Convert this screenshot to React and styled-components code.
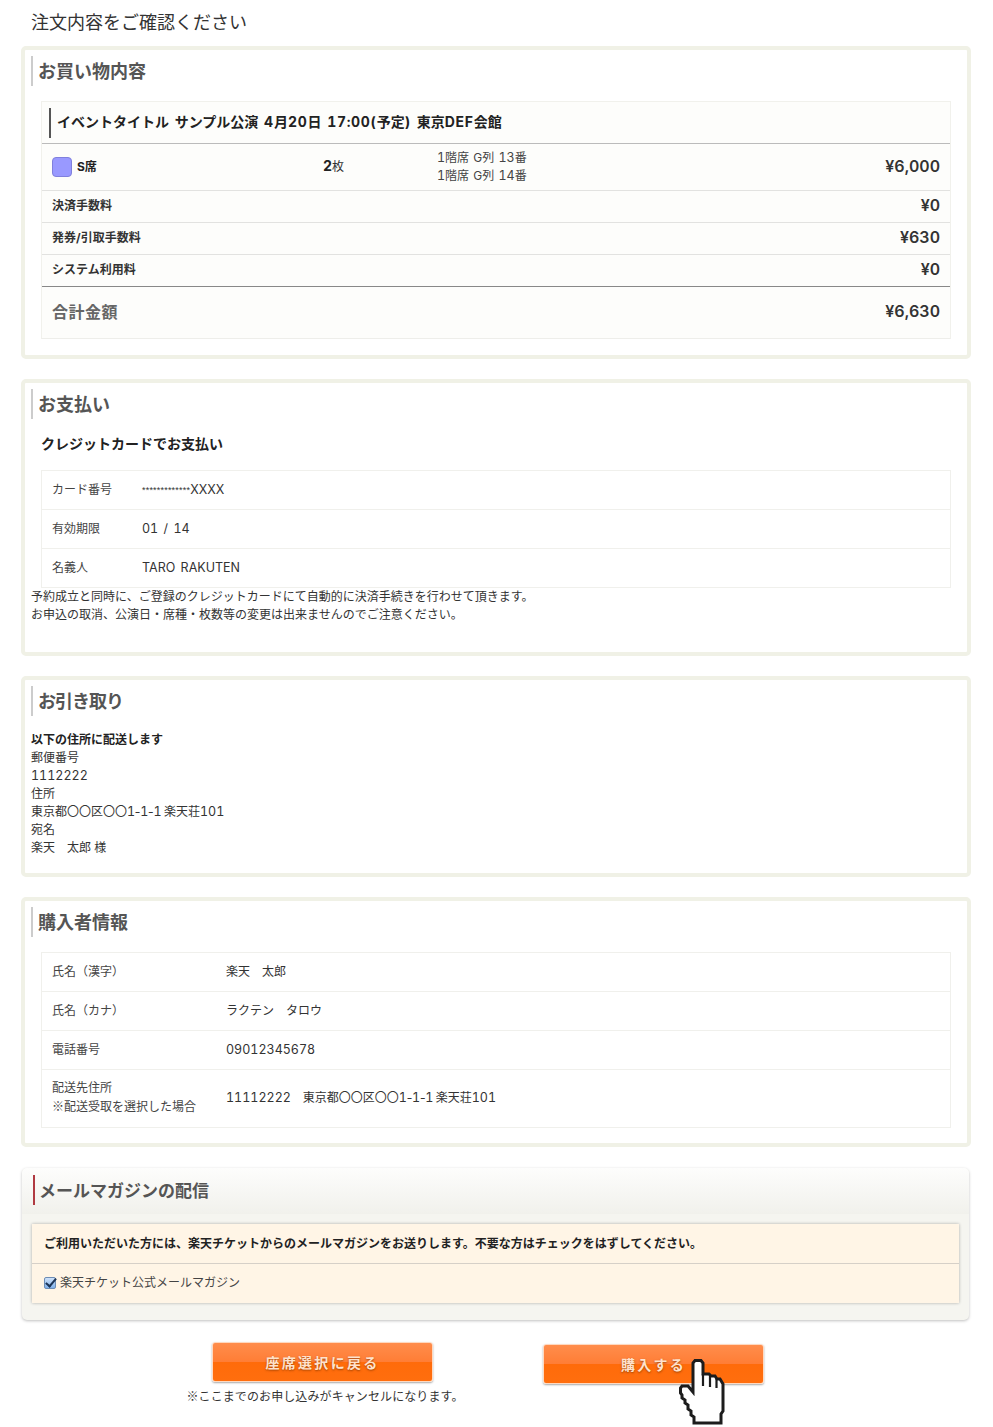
import React from "react";
import styled, { createGlobalStyle } from "styled-components";

const GlobalStyle = createGlobalStyle`
  html, body {
    margin: 0;
    padding: 0;
    background: #fff;
    color: #333;
    font-family: "Inter", "Noto Sans CJK JP", sans-serif;
    font-size: 12px;
    line-height: 18px;
    font-variant-numeric: tabular-nums;
  }
`;

const feeRows = [
  { label: "決済手数料", price: "¥0" },
  { label: "発券/引取手数料", price: "¥630" },
  { label: "システム利用料", price: "¥0" },
];

const buyerRows = [
  { label: "氏名（漢字）", value: "楽天　太郎" },
  { label: "氏名（カナ）", value: "ラクテン　タロウ" },
  { label: "電話番号", number: "09012345678" },
];

const App = () => {
  return (
    <Page>
      <GlobalStyle />
      <PageTitle>注文内容をご確認ください</PageTitle>

      <Section>
        <Heading>お買い物内容</Heading>
        <OrderTable>
          <EventRow>
            <EventTitle>
              イベントタイトル サンプル公演 <Latin>4</Latin>月<Latin>20</Latin>日 <Latin>17:00(</Latin>予定<Latin>)</Latin> 東京<Latin>DEF</Latin>会館
            </EventTitle>
          </EventRow>
          <SeatRow>
            <SeatType>
              <Swatch />
              <b>S席</b>
            </SeatType>
            <SeatCount>
              <b>2</b>枚
            </SeatCount>
            <SeatList>
              <NumText>1</NumText>階席 G列 <NumText>13</NumText>番
              <br />
              <NumText>1</NumText>階席 G列 <NumText>14</NumText>番
            </SeatList>
            <Price>¥6,000</Price>
          </SeatRow>
          {feeRows.map((row) => (
            <FeeRow key={row.label}>
              <FeeLabel>{row.label}</FeeLabel>
              <Price>{row.price}</Price>
            </FeeRow>
          ))}
          <TotalRow>
            <TotalLabel>合計金額</TotalLabel>
            <Price>¥6,630</Price>
          </TotalRow>
        </OrderTable>
      </Section>

      <PaymentSection>
        <Heading>お支払い</Heading>
        <SubHeading>クレジットカードでお支払い</SubHeading>
        <InfoTable>
          <InfoRow>
            <InfoLabel $width={90}>カード番号</InfoLabel>
            <InfoValue>
              <Stars>*************</Stars>
              <NumText>XXXX</NumText>
            </InfoValue>
          </InfoRow>
          <InfoRow>
            <InfoLabel $width={90}>有効期限</InfoLabel>
            <InfoValue>
              <NumText>01 / 14</NumText>
            </InfoValue>
          </InfoRow>
          <InfoRow>
            <InfoLabel $width={90}>名義人</InfoLabel>
            <InfoValue>
              <NumText>TARO RAKUTEN</NumText>
            </InfoValue>
          </InfoRow>
        </InfoTable>
        <Notes>
          予約成立と同時に、ご登録のクレジットカードにて自動的に決済手続きを行わせて頂きます。
          <br />
          お申込の取消、公演日・席種・枚数等の変更は出来ませんのでご注意ください。
        </Notes>
      </PaymentSection>

      <DeliverySection>
        <Heading $tight>お引き取り</Heading>
        <Delivery>
          <b>以下の住所に配送します</b>
          <br />
          郵便番号
          <br />
          <NumText>1112222</NumText>
          <br />
          住所
          <br />
          東京都〇〇区〇〇<NumText $tight>1-1-1 </NumText>楽天荘<NumText>101</NumText>
          <br />
          宛名
          <br />
          楽天　太郎 様
        </Delivery>
      </DeliverySection>

      <BuyerSection>
        <Heading>購入者情報</Heading>
        <InfoTable>
          {buyerRows.map((row) => (
            <InfoRow key={row.label}>
              <InfoLabel $width={174}>{row.label}</InfoLabel>
              <InfoValue>{row.number ? <NumText>{row.number}</NumText> : row.value}</InfoValue>
            </InfoRow>
          ))}
          <InfoRow $height={57}>
            <InfoLabel $width={174}>
              配送先住所
              <br />
              <Mark>※</Mark>配送受取を選択した場合
            </InfoLabel>
            <InfoValue>
              <NumText>11112222</NumText>　東京都〇〇区〇〇<NumText $tight>1-1-1 </NumText>楽天荘<NumText>101</NumText>
            </InfoValue>
          </InfoRow>
        </InfoTable>
      </BuyerSection>

      <MailSection>
        <MailHead>
          <MailHeading>メールマガジンの配信</MailHeading>
        </MailHead>
        <MailBox>
          <MailLead>ご利用いただいた方には、楽天チケットからのメールマガジンをお送りします。不要な方はチェックをはずしてください。</MailLead>
          <MailOption>
            <MailCheck type="checkbox" defaultChecked />
            楽天チケット公式メールマガジン
          </MailOption>
        </MailBox>
      </MailSection>

      <Actions>
        <BackColumn>
          <OrangeButton type="button">座席選択に戻る</OrangeButton>
          <Caption>
            <Mark>※</Mark>ここまでのお申し込みがキャンセルになります。
          </Caption>
        </BackColumn>
        <BuyColumn>
          <OrangeButton type="button">購入する</OrangeButton>
          <HandCursor viewBox="0 0 46 66" aria-hidden="true">
            <path
              d="M14 33 V4 L16 1.500 H22 L24 4 V15 H30 L32 17 H36 L38 20 H41 L44 25 V52 L42 55 V64 H15 V58 L12 56 V52 L9 50 V46 L6 44 V41 L3 39 V36 L1.500 34 V29 L3 27 H9 Z"
              fill="#fff"
              stroke="#1c1c1c"
              strokeWidth="3"
              strokeLinejoin="miter"
            />
            <path d="M24 15 V27 M31 17 V28 M37.500 20 V29" fill="none" stroke="#1c1c1c" strokeWidth="2.200" />
          </HandCursor>
        </BuyColumn>
      </Actions>
    </Page>
  );
};

export default App;

const Page = styled.div`
  width: 950px;
  height: 1427px;
  padding: 0 22px 0 21px;
  overflow: hidden;
`;

const PageTitle = styled.h1`
  margin: 0;
  padding: 10px 0 0 10px;
  height: 46px;
  box-sizing: border-box;
  font-size: 18px;
  line-height: 26px;
  font-weight: 400;
  color: #333;
`;

const Section = styled.section`
  box-sizing: border-box;
  height: 313px;
  margin-bottom: 20px;
  padding: 6px 16px 0 16px;
  border: 4px solid #f0f1e6;
  border-radius: 5px;
  background: #fff;
`;

const PaymentSection = styled(Section)`
  height: 277px;
`;

const DeliverySection = styled(Section)`
  height: 201px;
`;

const BuyerSection = styled(Section)`
  height: 250px;
  margin-bottom: 21px;
`;

const Heading = styled.h2`
  margin: 0 0 0 -10px;
  height: 30px;
  padding-left: 5px;
  border-left: 2px solid #ccc;
  font-size: 18px;
  line-height: 32px;
  font-weight: 700;
  letter-spacing: ${(props) => (props.$tight ? "-1px" : "0")};
  color: #555;
`;

const OrderTable = styled.div`
  margin-top: 15px;
  border: 1px solid #f1f1ec;
  border-bottom-color: #eeeeea;
  background: #fdfdfb;
`;

const EventRow = styled.div`
  box-sizing: border-box;
  height: 42px;
  padding: 6px 0 0 7px;
  border-bottom: 1px solid #bbb;
`;

const EventTitle = styled.div`
  height: 30px;
  padding-left: 6px;
  border-left: 2px solid #555;
  font-size: 14px;
  line-height: 27px;
  font-weight: 700;
  word-spacing: 2px;
  color: #222;
  white-space: nowrap;
`;

const Latin = styled.span`
  letter-spacing: 0.700px;
  line-height: 1;
`;

const SeatRow = styled.div`
  display: flex;
  align-items: center;
  box-sizing: border-box;
  height: 47px;
  padding: 0 10px 1px;
  border-bottom: 1px solid #e2e2e0;
`;

const SeatType = styled.div`
  display: flex;
  align-items: center;
  gap: 5px;
  width: 271px;
  color: #222;
`;

const Swatch = styled.span`
  box-sizing: border-box;
  width: 20px;
  height: 20px;
  border: 1px solid #8080dd;
  border-radius: 4px;
  background: #9999ff;
`;

const SeatCount = styled.div`
  width: 114px;
  color: #333;
  b {
    font-size: 14px;
    color: #222;
  }
`;

const SeatList = styled.div`
  flex: 1;
  line-height: 18px;
  word-spacing: 1px;
  color: #444;
`;

const Price = styled.div`
  margin: 0 0 2px auto;
  font-size: 16px;
  font-weight: 600;
  color: #333;
`;

const FeeRow = styled.div`
  display: flex;
  align-items: center;
  box-sizing: border-box;
  height: 32px;
  padding: 0 10px 1px;
  border-bottom: 1px solid #e2e2e0;
  &:nth-child(5) {
    border-bottom-color: #888;
  }
`;

const FeeLabel = styled.div`
  font-weight: 700;
  color: #333;
`;

const TotalRow = styled.div`
  display: flex;
  align-items: center;
  box-sizing: border-box;
  height: 51px;
  padding: 0 10px 2px;
`;

const TotalLabel = styled.div`
  font-size: 16px;
  line-height: 24px;
  font-weight: 700;
  letter-spacing: 0.500px;
  color: #666;
`;

const SubHeading = styled.h3`
  margin: 14px 0 0;
  height: 22px;
  font-size: 14px;
  line-height: 21px;
  font-weight: 700;
  color: #222;
`;

const InfoTable = styled.div`
  margin-top: 15px;
  border: 1px solid #f0f0ec;
  background: #fff;
`;

const InfoRow = styled.div`
  display: flex;
  align-items: center;
  box-sizing: border-box;
  height: ${(props) => (props.$height ? props.$height : 39)}px;
  padding-left: 10px;
  padding-bottom: ${(props) => (props.$height ? 2 : 0)}px;
  border-bottom: 1px solid #f0f0ec;
  &:last-child {
    border-bottom: 0;
    height: ${(props) => (props.$height ? props.$height : 38)}px;
  }
`;

const InfoLabel = styled.div`
  width: ${(props) => props.$width}px;
  flex-shrink: 0;
  color: #444;
`;

const InfoValue = styled.div`
  font-size: 12px;
  color: #333;
`;

const NumText = styled.span`
  font-size: 12.500px;
  line-height: 1;
  word-spacing: 2px;
  letter-spacing: ${(props) => (props.$tight ? "-1.500px" : "0")};
`;

const Mark = styled.span`
  font-family: "Noto Sans CJK JP", sans-serif;
`;

const Stars = styled.span`
  font-family: "Liberation Sans", sans-serif;
  font-size: 9px;
  line-height: 1;
  letter-spacing: 0.200px;
  vertical-align: 1px;
`;

const Notes = styled.p`
  margin: 0 0 0 -10px;
  line-height: 18px;
  color: #333;
`;

const Delivery = styled.div`
  margin: 15px 0 0 -10px;
  line-height: 18px;
  color: #333;
  b {
    color: #222;
  }
`;

const MailSection = styled.section`
  box-sizing: border-box;
  width: 947px;
  height: 152px;
  margin: 0 0 0 1px;
  border-radius: 5px;
  background: #f5f5f0;
  box-shadow: 0 1px 3px rgba(0, 0, 0, 0.25);
`;

const MailHead = styled.div`
  box-sizing: border-box;
  height: 46px;
  padding: 7px 0 0 11px;
  border-radius: 5px 5px 0 0;
  background: linear-gradient(#fdfdfc, #f1f1ec);
`;

const MailHeading = styled.h2`
  margin: 0;
  height: 30px;
  padding-left: 4px;
  border-left: 2px solid #b03a42;
  font-size: 17px;
  line-height: 32px;
  font-weight: 700;
  color: #555;
`;

const MailBox = styled.div`
  margin: 10px 10px 0 10px;
  height: 79px;
  background: #fff5e6;
  box-shadow: 0 0 3px rgba(0, 0, 0, 0.3);
`;

const MailLead = styled.div`
  box-sizing: border-box;
  height: 40px;
  padding: 11px 0 0 12px;
  border-bottom: 1px solid #d6d0c8;
  font-weight: 700;
  color: #222;
  white-space: nowrap;
`;

const MailOption = styled.label`
  display: flex;
  align-items: center;
  height: 38px;
  padding-left: 12px;
  color: #444;
`;

const MailCheck = styled.input`
  appearance: none;
  position: relative;
  box-sizing: border-box;
  width: 12px;
  height: 12px;
  margin: 0 4px 0 0;
  border: 1px solid #6d8db5;
  border-radius: 2px;
  background: linear-gradient(#cfe2fa, #7fb0ea);
  &::after {
    content: "";
    position: absolute;
    left: 3px;
    top: -2px;
    width: 4px;
    height: 9px;
    border: solid #1d3557;
    border-width: 0 2px 2px 0;
    transform: rotate(40deg);
  }
`;

const Actions = styled.div`
  display: flex;
  align-items: flex-start;
  margin-top: 22px;
`;

const BackColumn = styled.div`
  display: flex;
  flex-direction: column;
  align-items: center;
  width: 301px;
  margin-left: 151px;
`;

const BuyColumn = styled.div`
  position: relative;
  margin: 2px 0 0 70px;
`;

const OrangeButton = styled.button`
  display: block;
  width: 221px;
  height: 40px;
  padding: 0;
  border: 1px solid #ffd9c0;
  border-radius: 3px;
  background: linear-gradient(#ff8d4c 0%, #ff7d35 50%, #ff6b0a 50%, #ff6e0e 100%);
  box-shadow: 0 1px 2px rgba(0, 0, 0, 0.35);
  font-family: inherit;
  font-size: 14px;
  font-weight: 700;
  letter-spacing: 2.300px;
  color: #ffe2cc;
  text-shadow: 0 1px 2px rgba(120, 50, 0, 0.7);
`;

const Caption = styled.div`
  margin-top: 5px;
  padding-left: 5px;
  letter-spacing: 0.100px;
  color: #333;
  white-space: nowrap;
`;

const HandCursor = styled.svg`
  position: absolute;
  left: 136px;
  top: 15px;
  width: 46px;
  height: 66px;
`;
